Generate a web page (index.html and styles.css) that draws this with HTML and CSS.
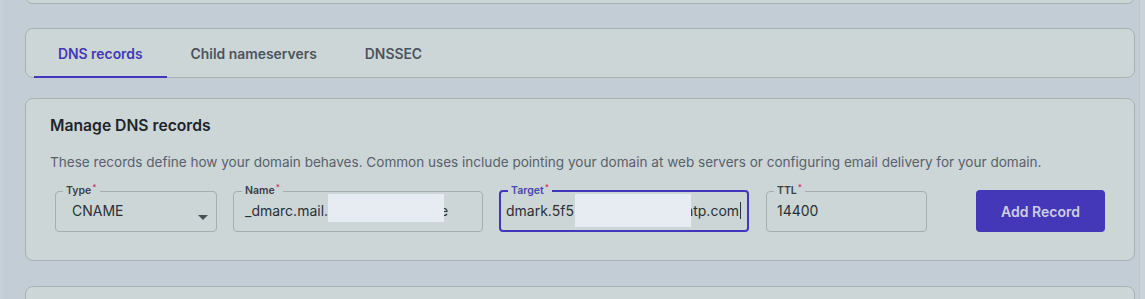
FILE: index.html
```html
<!DOCTYPE html>
<html lang="en">
<head>
<meta charset="utf-8">
<title>DNS records</title>
<link rel="stylesheet" href="styles.css">
</head>
<body>
<div class="page">
  <main class="content">
    <div class="card card-prev"></div>

    <nav class="card tabs">
      <a class="tab active">DNS records</a>
      <a class="tab">Child nameservers</a>
      <a class="tab">DNSSEC</a>
    </nav>

    <section class="card manage">
      <h2 class="title">Manage DNS records</h2>
      <p class="desc">These records define how your domain behaves. Common uses include pointing your domain at web servers or configuring email delivery for your domain.</p>
      <form class="row">
        <fieldset class="field f-type">
          <legend>Type<span class="req">*</span></legend>
          <div class="value">CNAME</div>
          <svg class="caret" width="10" height="5" viewBox="0 0 10 5"><path d="M0 0H10L5 5Z" fill="#4a5058"/></svg>
        </fieldset>
        <fieldset class="field f-name">
          <legend>Name<span class="req">*</span></legend>
          <div class="value">_dmarc.mail.<span class="redact r-name"></span><span class="tail">e</span></div>
        </fieldset>
        <fieldset class="field f-target focus">
          <legend>Target<span class="req">*</span></legend>
          <div class="value">dmark.5f5<span class="redact r-target"></span>ntp.com<span class="cursor"></span></div>
        </fieldset>
        <fieldset class="field f-ttl">
          <legend>TTL<span class="req">*</span></legend>
          <div class="value">14400</div>
        </fieldset>
        <button type="button" class="btn">Add Record</button>
      </form>
    </section>

    <div class="card card-next"></div>
  </main>
  <div class="scrollbar"></div>
</div>
</body>
</html>
```
FILE: styles.css
```css
* { box-sizing: border-box; }
html, body { margin: 0; padding: 0; }
body {
  background: #c3cdd5;
  font-family: Inter, "Noto Sans", sans-serif;
  color: #23282e;
  height: 299px;
  overflow: hidden;
}
.page {
  display: flex;
  height: 299px;
  overflow: hidden;
  border-left: 3px solid #c7d1d8;
}
.content {
  flex: 1;
  padding-left: 22px;
  padding-right: 4px;
  overflow: hidden;
}
.scrollbar {
  width: 6px;
  background: #c9d2d8;
  border-left: 1px solid #bcc6cd;
}
.card {
  background: #cdd6d7;
  border: 1px solid #a8b2b4;
  border-radius: 8px;
}
.card-prev {
  height: 40px;
  margin-top: -36px;
}
.tabs {
  margin-top: 24px;
  height: 50px;
  display: flex;
  padding: 0 8px;
}
.tab {
  display: flex;
  align-items: center;
  padding: 2px 24px 0 24px;
  font-size: 13.9px;
  font-weight: 600;
  color: #4c535c;
  border-bottom: 2px solid transparent;
  height: 49px;
}
.tab.active {
  color: #4338b6;
  border-bottom-color: #4336bc;
}
.manage {
  margin-top: 20px;
  height: 163px;
  padding: 17px 24px 0 24px;
}
.title {
  margin: 0;
  font-size: 15.7px;
  font-weight: 600;
  line-height: 20px;
  color: #1f242a;
}
.desc {
  margin: 17px 0 0 0;
  font-size: 13.55px;
  line-height: 18px;
  color: #58616b;
}
.row {
  display: flex;
  align-items: flex-start;
  margin: 14px 0 0 5px;
}
.field {
  position: relative;
  margin: 0;
  padding: 0 0 0 11px;
  height: 47px;
  border: 1px solid #a4aeb1;
  border-radius: 4px;
  min-width: 0;
}
.field legend {
  font-size: 10.5px;
  font-weight: 600;
  line-height: 12px;
  padding: 0 3px;
  margin-left: -3px;
  color: #3a4048;
}
.req {
  position: relative;
  top: -4px;
  color: #d0366a;
  font-size: 8px;
  margin-left: 1px;
}
.value {
  font-size: 14px;
  line-height: 20px;
  color: #2b3036;
  margin-top: 4px;
  white-space: nowrap;
  position: relative;
}
.f-type { width: 162px; padding-left: 16px; }
.f-type legend { margin-left: -9px; }
.caret {
  position: absolute;
  right: 8px;
  top: 18px;
}
.f-name { width: 250px; margin-left: 16px; }
.f-target { width: 250px; margin-left: 16px; }
.f-ttl { width: 161px; margin-left: 17px; padding-left: 10px; }
.f-ttl legend { margin-left: -3px; }
.focus {
  border: 2px solid #4336bc;
  padding-left: 5px;
}
.focus legend { color: #4a42b6; margin-left: 2px; }
.redact {
  display: inline-block;
  background: #e6ecf2;
  vertical-align: top;
  position: relative;
  z-index: 1;
}
.r-name {
  width: 116px;
  height: 28px;
  margin-top: -7px;
  margin-left: 0;
}
.tail { margin-left: -4px; }
.r-target {
  width: 116px;
  height: 33px;
  margin-top: -7px;
  margin-left: 1px;
  margin-right: -6px;
}
.cursor {
  display: inline-block;
  width: 1px;
  height: 17px;
  background: #2b3036;
  vertical-align: -3px;
  margin-left: 1px;
}
.btn {
  margin-left: 49px;
  margin-top: 5px;
  width: 129px;
  height: 42px;
  background: #4437b8;
  border: none;
  border-radius: 4px;
  color: #ccd0e2;
  font-family: Inter, "Noto Sans", sans-serif;
  font-size: 14px;
  font-weight: 600;
}
.card-next {
  margin-top: 25px;
  height: 40px;
}
```
